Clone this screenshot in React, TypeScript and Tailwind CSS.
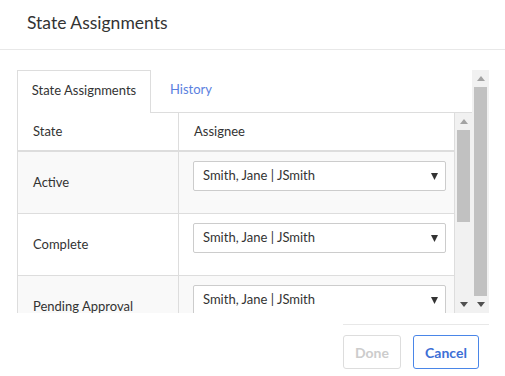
import React from "react";

// Data
const rows = [
  { state: "Active", assignee: "Smith, Jane | JSmith" },
  { state: "Complete", assignee: "Smith, Jane | JSmith" },
  { state: "Pending Approval", assignee: "Smith, Jane | JSmith" },
];

const UpArrow = ({ dim }: { dim?: boolean }) => (
  <svg width="8" height="5" viewBox="0 0 8 5" className="block">
    <polygon points="0,5 8,5 4,0" fill={dim ? "#a3a3a3" : "#505050"} />
  </svg>
);

const DownArrow = () => (
  <svg width="8" height="5" viewBox="0 0 8 5" className="block">
    <polygon points="0,0 8,0 4,5" fill="#505050" />
  </svg>
);

// Fake scrollbar, thumb size set by the caller
const ScrollBar = ({ thumbClass }: { thumbClass: string }) => (
  <div className="flex w-[17px] shrink-0 flex-col bg-[#f1f1f1]">
    <div className="flex h-[17px] items-center justify-center">
      <UpArrow dim />
    </div>
    <div className="flex flex-1 flex-col px-[2px]">
      <div className={`bg-[#c1c1c1] ${thumbClass}`} />
    </div>
    <div className="flex h-[17px] items-center justify-center">
      <DownArrow />
    </div>
  </div>
);

const SelectBox = ({ value }: { value: string }) => (
  <div className="flex h-[30px] w-[253px] items-center justify-between rounded-[2px] border border-[#cccccc] bg-white pl-[9px] pr-[7px] text-[#333]">
    <span>{value}</span>
    <svg width="7" height="7" viewBox="0 0 7 7">
      <polygon points="0,0 7,0 3.5,7" fill="#333" />
    </svg>
  </div>
);

export default function App() {
  return (
    <div
      className="h-[376px] w-[505px] overflow-hidden bg-white text-[#333]"
      style={{ fontFamily: "Lato, 'Open Sans', sans-serif" }}
    >
      {/* Header */}
      <div className="flex h-[50px] items-center border-b border-[#e8e8e8] pl-[27px] pb-[2px]">
        <h1 className="text-[17.5px] font-normal">State Assignments</h1>
      </div>

      {/* Body */}
      <div className="flex h-[263px] pl-[17px] pr-[16px] pt-[20px] text-[13px]">
        <div className="flex flex-1 flex-col">
          {/* Tabs */}
          <div className="flex h-[43px] items-end">
            <div className="flex h-[43px] w-[134px] items-center justify-center border border-b-0 border-[#dddddd] bg-white pb-[3px]">
              State Assignments
            </div>
            <div className="flex h-[43px] flex-1 items-center border-b border-[#dddddd] pb-[2px] pl-[19px] text-[#5b7fe0]">
              History
            </div>
          </div>

          {/* Table + inner scrollbar */}
          <div className="flex flex-1 overflow-hidden">
            <div className="flex-1 overflow-hidden border-l border-r border-[#dddddd]">
              <div className="flex h-[39px] border-b-2 border-[#dddddd]">
                <div className="flex w-[161px] items-center border-r border-[#dddddd] pl-[15px]">State</div>
                <div className="flex flex-1 items-center pl-[15px]">Assignee</div>
              </div>
              {rows.map((row, i) => (
                <div
                  key={row.state}
                  className={`flex h-[62px] shrink-0 border-b border-[#dddddd] ${i % 2 === 0 ? "bg-[#f9f9f9]" : "bg-white"}`}
                >
                  <div className="flex w-[161px] items-center border-r border-[#dddddd] pl-[15px]">{row.state}</div>
                  <div className="flex-1 pl-[14px] pt-[9px]">
                    <SelectBox value={row.assignee} />
                  </div>
                </div>
              ))}
            </div>
            <ScrollBar thumbClass="h-[92px]" />
          </div>
        </div>
        <ScrollBar thumbClass="flex-1" />
      </div>

      {/* Footer */}
      <div className="flex justify-end pr-[16px] pt-[11px]">
        <div className="flex w-[146px] gap-[12px] border-t border-[#e8e8e8] pt-[10px]">
          <button className="h-[34px] w-[58px] rounded-[3px] border border-[#dddddd] text-[14px] font-bold text-[#cccccc]">
            Done
          </button>
          <button className="h-[34px] w-[66px] rounded-[3px] border border-[#4a86e8] text-[14px] font-bold text-[#3d6fd6]">
            Cancel
          </button>
        </div>
      </div>
    </div>
  );
}
